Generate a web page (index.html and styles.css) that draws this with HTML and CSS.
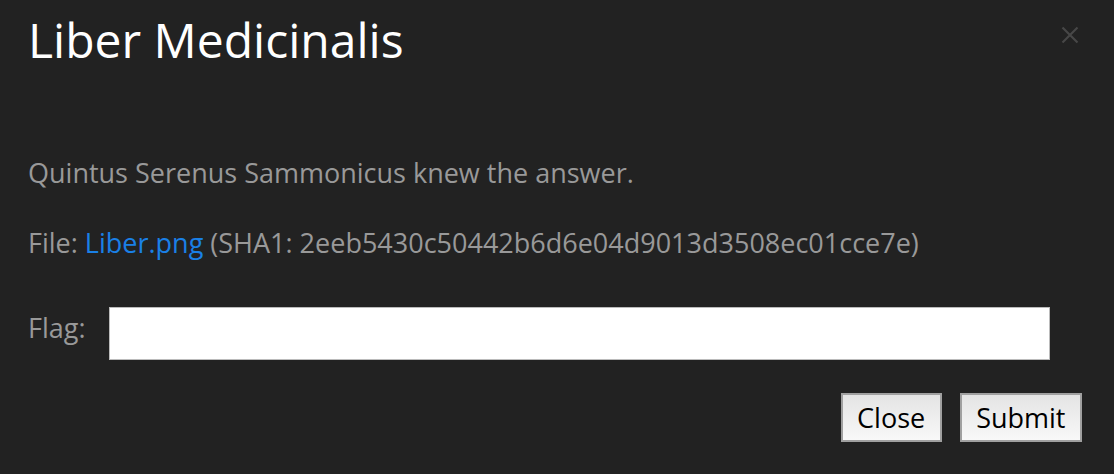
FILE: index.html
```html
<!DOCTYPE html>
<html>
<head>
<meta charset="utf-8">
<link rel="stylesheet" href="styles.css">
</head>
<body>
<div class="modal">
  <div class="header">
    <h1 class="title">Liber Medicinalis</h1>
    <button class="close-x" aria-label="Close">
      <svg width="18" height="18" viewBox="0 0 18 18"><path d="M1.5 1.5L16.5 16.5M16.5 1.5L1.5 16.5" stroke="#474747" stroke-width="2.2" fill="none"/></svg>
    </button>
  </div>
  <div class="body">
    <p class="desc">Quintus Serenus Sammonicus knew the answer.</p>
    <p class="file">File: <a class="link" href="#">Liber.png</a> (SHA1: 2eeb5430c50442b6d6e04d9013d3508ec01cce7e)</p>
    <div class="flag-row">
      <label class="flag-label">Flag:</label>
      <input class="flag-input" type="text">
    </div>
  </div>
  <div class="footer">
    <button class="btn">Close</button>
    <button class="btn">Submit</button>
  </div>
</div>
</body>
</html>
```
FILE: styles.css
```css
html, body {
  margin: 0;
  padding: 0;
  background: #222222;
  width: 1114px;
  height: 474px;
  overflow: hidden;
}
.modal {
  font-family: "Open Sans", "Noto Sans", sans-serif;
  color: #999999;
  padding: 0 32px 0 28px;
}
.header {
  display: flex;
  justify-content: space-between;
  align-items: flex-start;
  height: 100px;
}
.title {
  margin: 0;
  padding-top: 8px;
  font-size: 48px;
  font-weight: 400;
  line-height: 64px;
  color: #ffffff;
}
.close-x {
  margin-top: 26px;
  margin-right: 3px;
  background: none;
  border: 0;
  padding: 0;
  width: 18px;
  height: 18px;
}
.body {
  padding-top: 54px;
}
.desc, .file {
  margin: 0;
  font-size: 27px;
  line-height: 38px;
}
.file {
  margin-top: 32px;
}
.link {
  color: #1a80e6;
  text-decoration: none;
}
.flag-row {
  display: flex;
  align-items: center;
  margin-top: 45px;
}
.flag-label {
  font-size: 27px;
  width: 81px;
  margin-top: -12px;
}
.flag-input {
  width: 941px;
  height: 53px;
  box-sizing: border-box;
  border: 1px solid #bbbbbb;
  background: #ffffff;
  margin: 0;
  padding: 0;
}
.footer {
  display: flex;
  justify-content: flex-end;
  gap: 18px;
  margin-top: 33px;
  margin-right: 0;
}
.btn {
  font-family: "Open Sans", "Noto Sans", sans-serif;
  font-size: 27px;
  color: #000000;
  height: 49px;
  padding: 0 14.5px;
  border: 2px solid #a0a0a0;
  background: linear-gradient(#e4e4e4, #f8f8f8);
  border-radius: 0;
}
```
